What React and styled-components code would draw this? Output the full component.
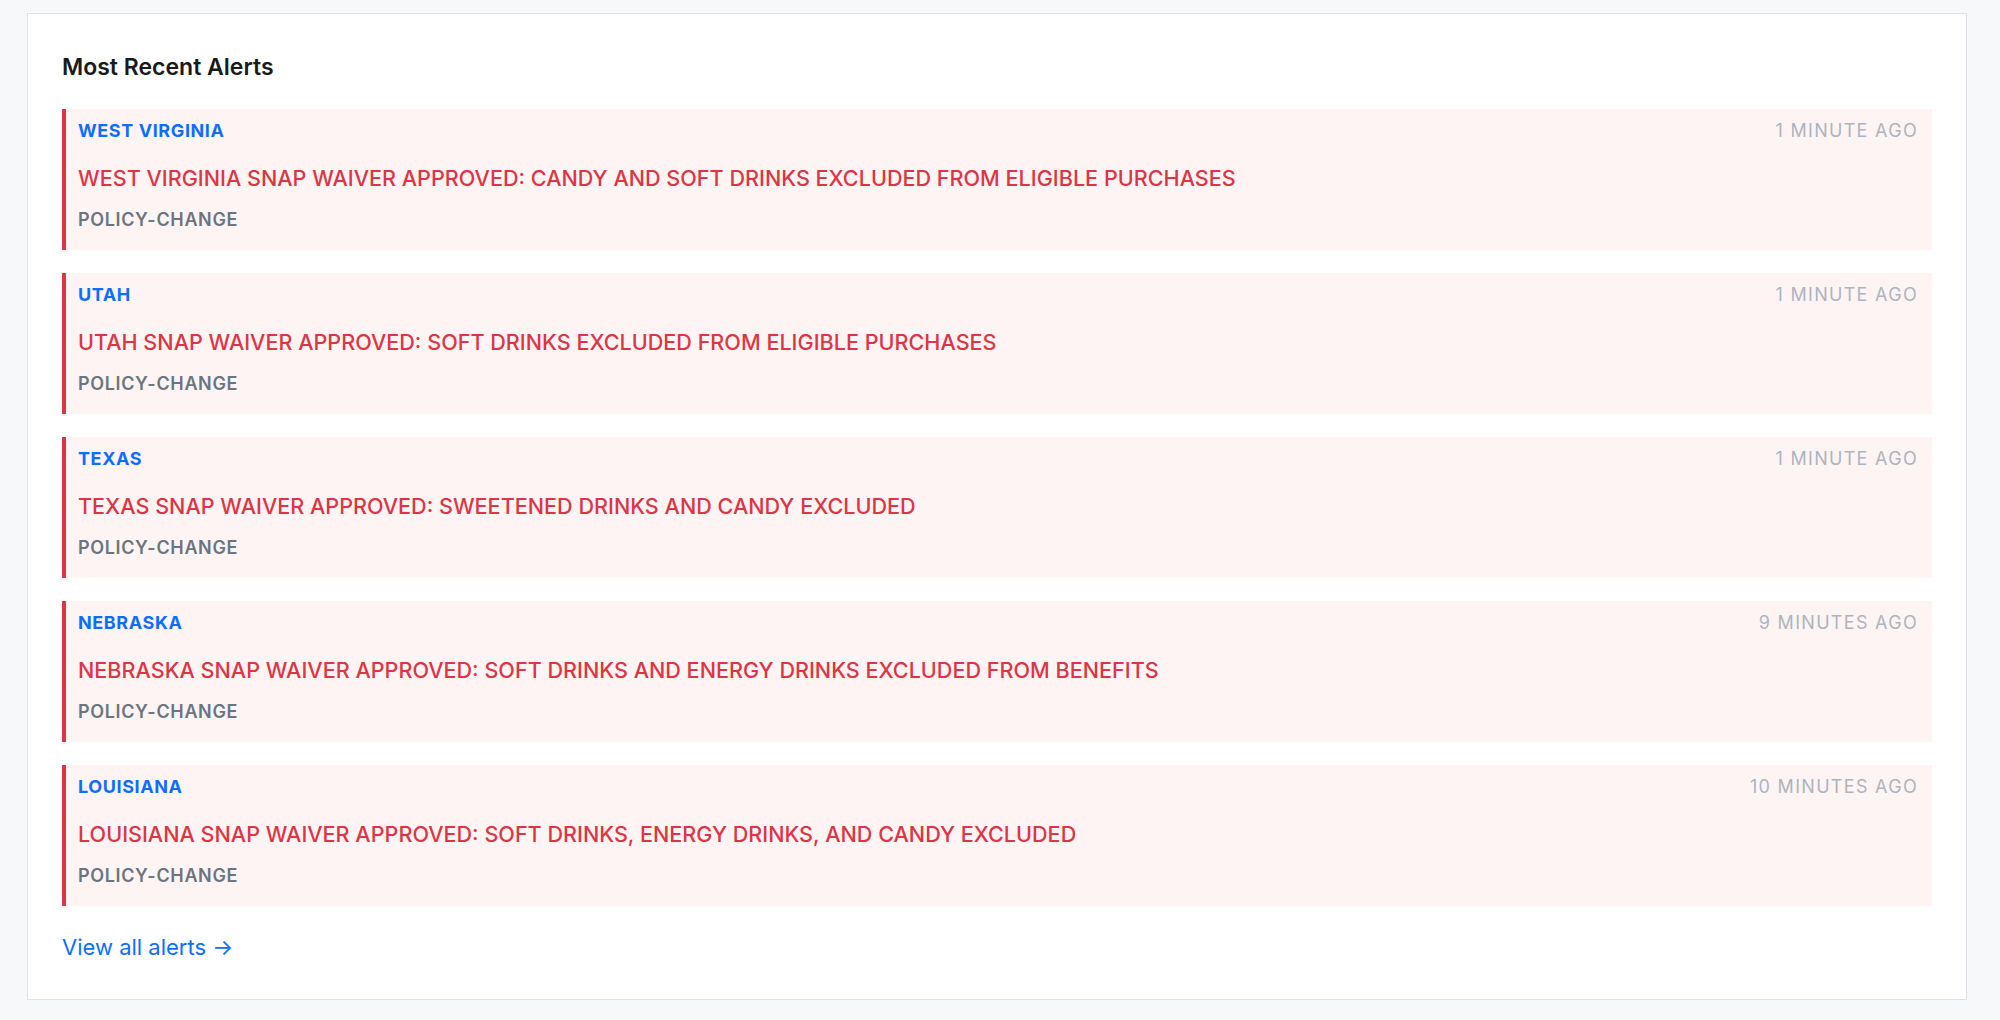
import React from "react";
import styled, { createGlobalStyle } from "styled-components";

const GlobalStyle = createGlobalStyle`
  html, body {
    margin: 0;
    padding: 0;
    background: #f7f8fa;
    font-family: Inter, "Noto Sans", "Liberation Sans", sans-serif;
  }
`;

const Page = styled.div`
  padding: 13px 33px 20px 27px;
`;

const Card = styled.section`
  background: #ffffff;
  border: 1px solid #dfe1e6;
  padding: 39px 34px 38px 34px;
`;

const Title = styled.h2`
  margin: 0 0 27px 0;
  font-size: 23px;
  line-height: 29px;
  font-weight: 600;
  color: #1a1a1a;
`;

const List = styled.div`
  display: flex;
  flex-direction: column;
  gap: 23px;
`;

const Alert = styled.div`
  background: #fff4f4;
  border-left: 4px solid #dc3545;
  padding: 11px 14px 19px 12px;
`;

const TopRow = styled.div`
  display: flex;
  justify-content: space-between;
  align-items: baseline;
`;

const State = styled.span`
  font-size: 18px;
  line-height: 22px;
  font-weight: 700;
  letter-spacing: 0.6px;
  color: #0d6efd;
`;

const Time = styled.span`
  font-size: 18px;
  line-height: 22px;
  font-weight: 400;
  letter-spacing: 1.3px;
  color: #adb4bd;
`;

const Headline = styled.div`
  margin-top: 23px;
  font-size: 21.6px;
  line-height: 27px;
  font-weight: 500;
  color: #dc3545;
`;

const Tag = styled.div`
  margin-top: 17px;
  font-size: 18px;
  line-height: 22px;
  font-weight: 600;
  letter-spacing: 0.65px;
  color: #6c757d;
`;

const ViewAll = styled.a`
  display: inline-block;
  margin-top: 28px;
  font-size: 22px;
  line-height: 27px;
  color: #0d6efd;
  text-decoration: none;
`;

const alerts = [
  {
    state: "WEST VIRGINIA",
    time: "1 MINUTE AGO",
    title:
      "WEST VIRGINIA SNAP WAIVER APPROVED: CANDY AND SOFT DRINKS EXCLUDED FROM ELIGIBLE PURCHASES",
  },
  {
    state: "UTAH",
    time: "1 MINUTE AGO",
    title: "UTAH SNAP WAIVER APPROVED: SOFT DRINKS EXCLUDED FROM ELIGIBLE PURCHASES",
  },
  {
    state: "TEXAS",
    time: "1 MINUTE AGO",
    title: "TEXAS SNAP WAIVER APPROVED: SWEETENED DRINKS AND CANDY EXCLUDED",
  },
  {
    state: "NEBRASKA",
    time: "9 MINUTES AGO",
    title:
      "NEBRASKA SNAP WAIVER APPROVED: SOFT DRINKS AND ENERGY DRINKS EXCLUDED FROM BENEFITS",
  },
  {
    state: "LOUISIANA",
    time: "10 MINUTES AGO",
    title:
      "LOUISIANA SNAP WAIVER APPROVED: SOFT DRINKS, ENERGY DRINKS, AND CANDY EXCLUDED",
  },
];

export default function App() {
  return (
    <>
      <GlobalStyle />
      <Page>
        <Card>
          <Title>Most Recent Alerts</Title>
          <List>
            {alerts.map((a) => (
              <Alert key={a.state}>
                <TopRow>
                  <State>{a.state}</State>
                  <Time>{a.time}</Time>
                </TopRow>
                <Headline>{a.title}</Headline>
                <Tag>POLICY-CHANGE</Tag>
              </Alert>
            ))}
          </List>
          <ViewAll href="#">View all alerts →</ViewAll>
        </Card>
      </Page>
    </>
  );
}
